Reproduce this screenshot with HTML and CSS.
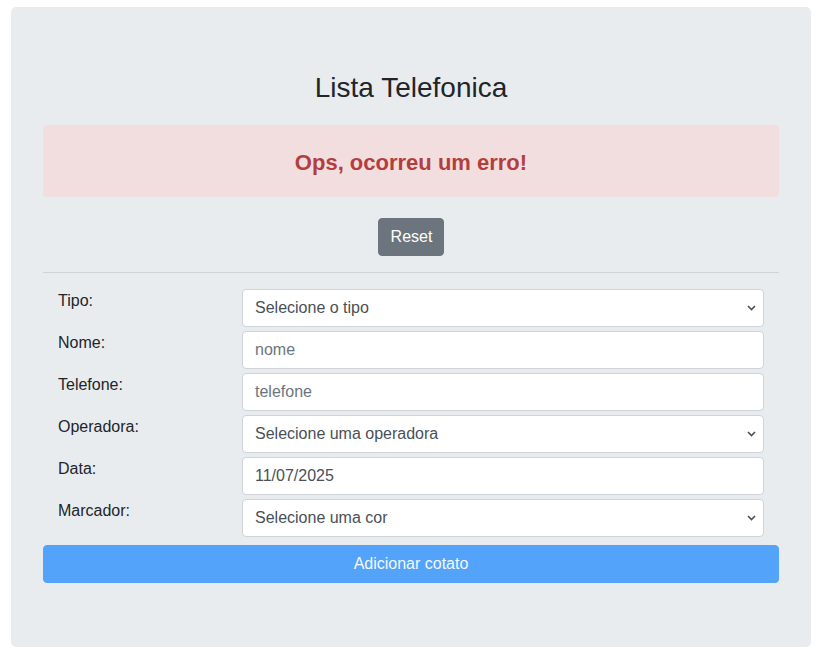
FILE: index.html
```html
<!DOCTYPE html>
<html lang="pt">
<head>
<meta charset="utf-8">
<title>Lista Telefonica</title>
<link rel="stylesheet" href="styles.css">
</head>
<body>
<div class="jumbo">
  <h3 class="title">Lista Telefonica</h3>
  <div class="alert">Ops, ocorreu um erro!</div>
  <div class="center"><button class="btn btn-reset" type="button">Reset</button></div>
  <hr class="sep">
  <form class="form">
    <div class="row">
      <label class="lbl">Tipo:</label>
      <div class="field">
        <select class="ctrl"><option>Selecione o tipo</option></select>
      </div>
    </div>
    <div class="row">
      <label class="lbl">Nome:</label>
      <div class="field"><input class="ctrl" type="text" placeholder="nome"></div>
    </div>
    <div class="row">
      <label class="lbl">Telefone:</label>
      <div class="field"><input class="ctrl" type="text" placeholder="telefone"></div>
    </div>
    <div class="row">
      <label class="lbl">Operadora:</label>
      <div class="field">
        <select class="ctrl"><option>Selecione uma operadora</option></select>
      </div>
    </div>
    <div class="row">
      <label class="lbl">Data:</label>
      <div class="field"><input class="ctrl" type="text" value="11/07/2025"></div>
    </div>
    <div class="row">
      <label class="lbl">Marcador:</label>
      <div class="field">
        <select class="ctrl"><option>Selecione uma cor</option></select>
      </div>
    </div>
    <button class="btn btn-add" type="button">Adicionar cotato</button>
  </form>
</div>
</body>
</html>
```

FILE: styles.css
```css
html, body {
  margin: 0;
  padding: 0;
  background: #fff;
}
body {
  font-family: "Liberation Sans", Arial, sans-serif;
  font-size: 16px;
  line-height: 1.5;
  color: #212529;
  padding: 7px 0 0 11px;
}
.jumbo {
  width: 800px;
  box-sizing: border-box;
  background: #e9ecef;
  border-radius: 5px;
  padding: 64px 32px 64px;
}
.title {
  margin: 0 0 20px;
  font-size: 28px;
  line-height: 34px;
  font-weight: 400;
  text-align: center;
  color: #212529;
}
.alert {
  height: 72px;
  box-sizing: border-box;
  display: flex;
  align-items: center;
  justify-content: center;
  padding-top: 2px;
  background: #f2dede;
  color: #b33e3d;
  border-radius: 4px;
  font-size: 22px;
  font-weight: 700;
  margin-bottom: 21px;
}
.center {
  display: flex;
  justify-content: center;
}
.btn {
  font-family: "Liberation Sans", Arial, sans-serif;
  font-size: 16px;
  line-height: 24px;
  padding: 6px 12px;
  border: 1px solid transparent;
  border-radius: 4px;
  cursor: pointer;
}
.btn-reset {
  height: 38px;
  padding: 5px 11px 6px 12px;
  background: #6c757d;
  border-color: #6c757d;
  color: #fff;
}
.sep {
  margin: 16px 0 16px;
  border: 0;
  border-top: 1px solid rgba(0, 0, 0, 0.1);
}
.form {
  display: flex;
  flex-direction: column;
  gap: 4px;
}
.row {
  display: grid;
  grid-template-columns: 184px 1fr;
}
.lbl {
  padding: 0 15px;
  line-height: 24px;
  color: #212529;
}
.field {
  padding: 0 15px;
}
.ctrl {
  display: block;
  width: 100%;
  height: 38px;
  box-sizing: border-box;
  padding: 6px 12px;
  font-family: "Liberation Sans", Arial, sans-serif;
  font-size: 16px;
  line-height: 24px;
  color: #495057;
  background: #fff;
  border: 1px solid #ced4da;
  border-radius: 4px;
}
select.ctrl {
  -webkit-appearance: none;
  appearance: none;
  padding: 5px 24px 6px 12px;
  background-image: url("data:image/svg+xml;utf8,<svg xmlns='http://www.w3.org/2000/svg' width='9' height='6' viewBox='0 0 9 6'><path d='M1 1l3.5 3.5L8 1' fill='none' stroke='%23495057' stroke-width='1.6'/></svg>");
  background-repeat: no-repeat;
  background-position: right 7px center;
  background-size: 9px 6px;
}
.ctrl::placeholder {
  color: #6c757d;
  opacity: 1;
}
.btn-add {
  margin-top: 4px;
  width: 100%;
  height: 38px;
  background: #52a3f9;
  border-color: #52a3f9;
  color: #f5f8fb;
}
```
